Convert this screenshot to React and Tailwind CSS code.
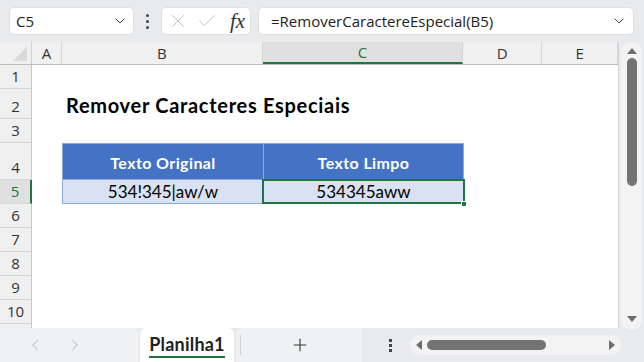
import { ChevronDown, X, Check, ChevronLeft, ChevronRight, Plus } from 'lucide-react';

const FONT = { fontFamily: '"Open Sans", "Noto Sans", sans-serif' };
const CELL_FONT = { fontFamily: 'Lato, "Open Sans", sans-serif' };

const cols = [
  { key: 'A', w: 'w-[30px]' },
  { key: 'B', w: 'w-[201px]' },
  { key: 'C', w: 'w-[201px]' },
  { key: 'D', w: 'w-[79px]' },
  { key: 'E', w: 'w-[76px]' },
];

// row 11 is only a sliver at the bottom, its number is hidden
const rows = [
  { n: 1, h: 'h-[24px]' },
  { n: 2, h: 'h-[30px]' },
  { n: 3, h: 'h-[24px]' },
  { n: 4, h: 'h-[37px]' },
  { n: 5, h: 'h-[24px]' },
  { n: 6, h: 'h-[24px]' },
  { n: 7, h: 'h-[24px]' },
  { n: 8, h: 'h-[24px]' },
  { n: 9, h: 'h-[24px]' },
  { n: 10, h: 'h-[24px]' },
  { n: 11, h: 'h-[24px]', hidden: true },
];

function RowCells({ n }) {
  if (n === 2) {
    return (
      <div className="flex items-end h-full">
        <div className="w-[30px]" />
        <div
          className="pl-[4px] pb-[4px] text-[20px] font-bold text-black whitespace-nowrap leading-none tracking-[0.7px]"
          style={CELL_FONT}
        >
          Remover Caracteres Especiais
        </div>
      </div>
    );
  }
  if (n === 4) {
    return (
      <div className="flex h-full">
        <div className="w-[30px]" />
        <div className="w-[201px] bg-[#4472c4] border border-[#8eaadb] border-r-0 flex items-center justify-center pt-[2px] text-white font-bold text-[16px] tracking-[0.4px]" style={CELL_FONT}>
          Texto Original
        </div>
        <div className="w-[201px] bg-[#4472c4] border border-[#8eaadb] flex items-center justify-center pt-[2px] text-white font-bold text-[16px] tracking-[0.4px]" style={CELL_FONT}>
          Texto Limpo
        </div>
      </div>
    );
  }
  if (n === 5) {
    return (
      <div className="flex h-full">
        <div className="w-[30px]" />
        <div className="w-[201px] bg-[#d9e1f2] border border-t-0 border-r-0 border-[#8eaadb] flex items-center justify-center text-black text-[17px]" style={CELL_FONT}>
          534!345|aw/w
        </div>
        <div className="relative w-[201px] bg-[#d9e1f2] flex items-center justify-center text-black text-[17px]" style={CELL_FONT}>
          534345aww
          <div className="absolute -left-[1px] -top-[1px] -right-[1px] bottom-0 border-2 border-[#217346]" />
          <div className="absolute -right-[3px] -bottom-[3px] w-[6px] h-[6px] bg-[#217346] border border-white" />
        </div>
      </div>
    );
  }
  return null;
}

export default function App() {
  return (
    <div className="w-[644px] h-[362px] bg-[#e8eaed] flex flex-col overflow-hidden text-[#333]" style={FONT}>
      {/* formula bar */}
      <div className="h-[42px] flex items-center pl-[9px] pr-[10px] gap-[7px]">
        <div className="w-[125px] h-[28px] bg-white rounded-[5px] border border-[#e0e0e0] flex items-center justify-between pl-[6px] pr-[5px]">
          <span className="text-[15px] text-[#222]">C5</span>
          <ChevronDown size={16} strokeWidth={1.5} className="text-[#444]" />
        </div>
        <div className="w-[13px] flex flex-col items-center gap-[3px]">
          <div className="w-[3px] h-[3px] bg-[#444] rounded-full" />
          <div className="w-[3px] h-[3px] bg-[#444] rounded-full" />
          <div className="w-[3px] h-[3px] bg-[#444] rounded-full" />
        </div>
        <div className="w-[90px] h-[28px] bg-white rounded-[5px] border border-[#e0e0e0] flex items-center pl-[5px]">
          <X size={22} strokeWidth={1} className="text-[#bbb]" />
          <Check size={22} strokeWidth={1} className="ml-[7px] text-[#bbb]" />
          <span className="ml-[12px] text-[21px] italic text-[#333] leading-none" style={{ fontFamily: '"Liberation Serif", serif' }}>fx</span>
        </div>
        <div className="flex-1 h-[28px] bg-white rounded-[5px] border border-[#e0e0e0] flex items-center justify-between pl-[12px] pr-[6px]">
          <span className="text-[15px] text-[#222]">=RemoverCaractereEspecial(B5)</span>
          <ChevronDown size={16} strokeWidth={1.5} className="text-[#444]" />
        </div>
      </div>

      {/* sheet area */}
      <div className="flex h-[286px]">
        <div className="w-[619px] bg-white flex flex-col overflow-hidden border-r border-[#d6d6d6]">
          {/* column headers */}
          <div className="flex h-[23px] bg-[#f0f0f0] border-b border-[#bdbdbd] shrink-0">
            <div className="w-[32px] border-r border-[#d0d0d0] relative overflow-hidden">
              <div className="absolute right-[4px] bottom-[3px] w-0 h-0 border-l-[14px] border-l-transparent border-b-[14px] border-b-[#d9d9d9]" />
            </div>
            {cols.map((c) => (
              <div
                key={c.key}
                className={`${c.w} flex items-center justify-center text-[15px] border-r border-[#d6d6d6] ${c.key === 'C' ? 'bg-[#e0e0e0] text-[#217346] border-b-2 border-b-[#217346]' : 'text-[#333]'}`}
              >
                {c.key}
              </div>
            ))}
          </div>
          {rows.map((r) => (
            <div key={r.n} className={`flex ${r.h} shrink-0`}>
              <div
                className={`w-[32px] shrink-0 flex items-end justify-center pb-[1px] text-[15px] leading-[22px] border-b border-[#d6d6d6] ${r.n === 5 ? 'bg-[#e0e0e0] text-[#217346] border-r-2 border-r-[#217346]' : 'bg-[#f0f0f0] text-[#333] border-r border-r-[#c8c8c8]'}`}
              >
                {r.hidden ? null : r.n}
              </div>
              <div className="flex-1">
                <RowCells n={r.n} />
              </div>
            </div>
          ))}
        </div>
        {/* vertical scrollbar */}
        <div className="flex-1 pl-[2px] pr-[2px]">
          <div className="h-[288px] bg-[#f3f3f3] rounded-b-[10px] rounded-t-[10px] flex flex-col items-center pt-[6px]">
            <div className="w-0 h-0 border-l-[5px] border-l-transparent border-r-[5px] border-r-transparent border-b-[6px] border-b-[#6e6e6e]" />
            <div className="mt-[4px] w-[10px] h-[128px] bg-[#737373] rounded-full" />
            <div className="flex-1" />
            <div className="mb-[8px] w-0 h-0 border-l-[5px] border-l-transparent border-r-[5px] border-r-transparent border-t-[6px] border-t-[#6e6e6e]" />
          </div>
        </div>
      </div>

      {/* bottom bar */}
      <div className="flex-1 flex items-end">
        <div className="w-[138px] h-[34px] bg-[#f0f1f3] rounded-tr-[6px] flex items-center pl-[26px] gap-[22px] text-[#aaa]">
          <ChevronLeft size={18} strokeWidth={1.2} />
          <ChevronRight size={18} strokeWidth={1.2} />
        </div>
        <div className="ml-[2px] w-[94px] h-[34px] bg-white rounded-t-[6px] flex flex-col items-center justify-center relative">
          <span className="text-[18px] font-bold text-[#222] leading-none tracking-[0.2px] pb-[2px]" style={CELL_FONT}>Planilha1</span>
          <div className="absolute bottom-[4px] left-[9px] right-[9px] h-[2px] bg-[#217346]" />
        </div>
        <div className="ml-[2px] w-[126px] h-[34px] bg-[#f0f1f3] rounded-tl-[6px] flex items-center">
          <div className="ml-[4px] w-px h-[20px] bg-[#d0d0d0]" />
          <Plus size={20} strokeWidth={1.3} className="ml-[49px] text-[#333]" />
        </div>
        <div className="h-[34px] flex items-center ml-[27px]">
          <div className="flex flex-col gap-[2px]">
            <div className="w-[3px] h-[3px] bg-[#444]" />
            <div className="w-[3px] h-[3px] bg-[#444]" />
            <div className="w-[3px] h-[3px] bg-[#444]" />
          </div>
        </div>
        <div className="h-[34px] flex items-center ml-[18px]">
          <div className="w-[211px] h-[20px] bg-[#f3f3f3] rounded-full flex items-center px-[6px]">
            <div className="w-0 h-0 border-t-[5px] border-t-transparent border-b-[5px] border-b-transparent border-r-[6px] border-r-[#6e6e6e]" />
            <div className="ml-[5px] w-[119px] h-[10px] bg-[#737373] rounded-full" />
            <div className="flex-1" />
            <div className="w-0 h-0 border-t-[5px] border-t-transparent border-b-[5px] border-b-transparent border-l-[6px] border-l-[#6e6e6e]" />
          </div>
        </div>
      </div>
    </div>
  );
}
